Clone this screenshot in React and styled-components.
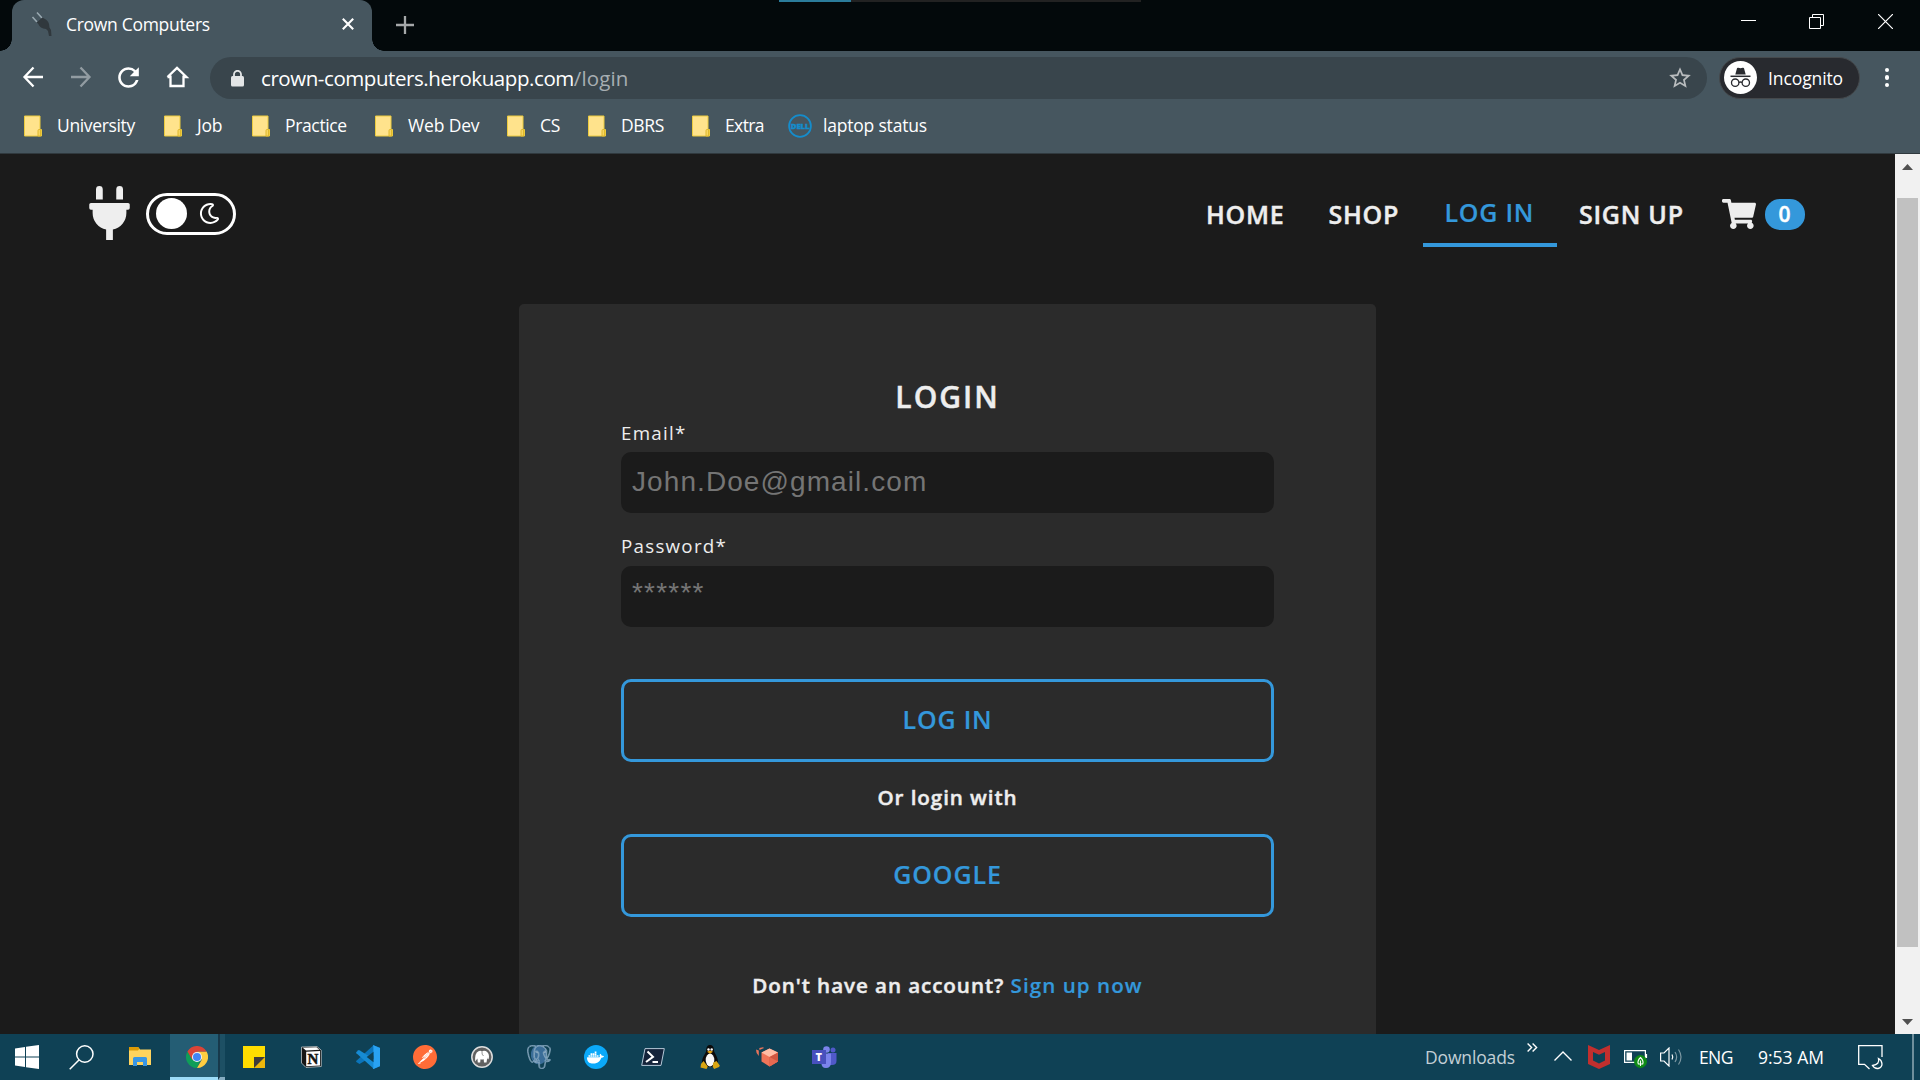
import React from "react";
import styled, { createGlobalStyle, css } from "styled-components";
import { FaPlug, FaShoppingCart, FaRegMoon } from "react-icons/fa";
import { MdRefresh, MdStarBorder } from "react-icons/md";
import { SiDocker, SiPostman, SiPostgresql } from "react-icons/si";

const GlobalStyle = createGlobalStyle`
  * { box-sizing: border-box; }
  html, body { margin: 0; padding: 0; background: #1b1b1b; overflow: hidden; }
  body { font-family: "Open Sans", "Noto Sans", sans-serif; }
  svg { display: block; flex: none; }
`;

const heavy = css`
  font-weight: 600;
  -webkit-text-stroke: 0.45px currentColor;
`;

const Screen = styled.div`
  width: 1920px;
  height: 1080px;
  display: flex;
  flex-direction: column;
  overflow: hidden;
  position: relative;
`;

/* ---------- browser chrome ---------- */

const TabStrip = styled.div`
  height: 51px;
  flex: none;
  display: flex;
  background: #03090b;
  padding-left: 12px;
`;

const LoadTrack = styled.div`
  position: absolute;
  top: 0;
  left: 779px;
  width: 362px;
  height: 2px;
  background: #222;
`;

const LoadValue = styled.div`
  width: 72px;
  height: 2px;
  background: #2b7c9b;
`;

const Tab = styled.div`
  position: relative;
  width: 360px;
  height: 51px;
  display: flex;
  align-items: center;
  padding: 0 18px 3px 19px;
  background: #46565f;
  border-radius: 12px 12px 0 0;
  &::before,
  &::after {
    content: "";
    position: absolute;
    bottom: 0;
    width: 12px;
    height: 12px;
  }
  &::before {
    left: -12px;
    background: radial-gradient(circle at 0 0, transparent 11.5px, #46565f 12px);
  }
  &::after {
    right: -12px;
    background: radial-gradient(circle at 100% 0, transparent 11.5px, #46565f 12px);
  }
`;

const TabTitle = styled.span`
  flex: 1;
  margin-left: 11px;
  color: #fff;
  font-size: 17.5px;
  letter-spacing: -0.3px;
  line-height: 24px;
  white-space: nowrap;
`;

const NewTab = styled.div`
  margin-left: 24px;
  display: flex;
  align-items: center;
  padding-bottom: 1px;
`;

const WindowControls = styled.div`
  margin-left: auto;
  display: grid;
  grid-template-columns: 68px 69px 15px;
  padding: 14px 27px 0 0;
  height: 30px;
`;

const Toolbar = styled.div`
  height: 54px;
  flex: none;
  display: flex;
  align-items: center;
  background: #46565f;
  padding-left: 18px;
`;

const NavButtons = styled.div`
  display: flex;
  gap: 17.5px;
  width: 192px;
  padding-bottom: 1px;
`;

const Omnibox = styled.div`
  width: 1497px;
  height: 42px;
  border-radius: 21px;
  background: #39454c;
  display: flex;
  align-items: center;
  padding: 0 14px 0 21px;
`;

const Url = styled.span`
  flex: 1;
  margin-left: 17px;
  font-size: 20.5px;
  line-height: 28px;
  color: #fff;
  letter-spacing: -0.43px;
  white-space: nowrap;
`;

const UrlPath = styled.span`
  color: #a7aeb2;
  letter-spacing: 0.1px;
`;

const Incognito = styled.div`
  margin-left: 12px;
  width: 141px;
  height: 42px;
  border-radius: 21px;
  border: 1px solid #45494c;
  background: #282a2f;
  display: flex;
  align-items: center;
  padding: 0 0 1px 4px;
  color: #fff;
  font-size: 17.5px;
  letter-spacing: -0.1px;
  gap: 11px;
`;

const Kebab = styled.div`
  margin-left: 24.5px;
  padding-bottom: 1px;
  display: flex;
  flex-direction: column;
  gap: 3px;
`;

const KebabDot = styled.i`
  width: 4.6px;
  height: 4.6px;
  border-radius: 50%;
  background: #fff;
`;

const BookmarkBar = styled.div`
  height: 49px;
  flex: none;
  display: flex;
  background: #46565f;
  border-bottom: 1px solid #30393e;
  padding: 0 0 8px 24px;
`;

const Bookmark = styled.div`
  width: ${(p) => p.$width}px;
  display: flex;
  align-items: center;
  gap: ${(p) => p.$gap || 15}px;
  color: #fff;
  font-size: 17.5px;
  letter-spacing: ${(p) => p.$track || 0}px;
  white-space: nowrap;
  svg {
    margin-top: 2px;
  }
`;

/* ---------- site ---------- */

const Viewport = styled.div`
  height: 880px;
  flex: none;
  display: flex;
`;

const Page = styled.main`
  width: 1895px;
  height: 880px;
  overflow: hidden;
  background: #1b1b1b;
  color: #eee;
`;

const Scrollbar = styled.div`
  width: 25px;
  background: #f1f1f1;
  display: flex;
  flex-direction: column;
  align-items: center;
  padding: 10px 0 9px;
`;

const ScrollThumb = styled.div`
  width: 21px;
  height: 749px;
  margin-top: 28px;
  margin-bottom: auto;
  background: #c1c1c1;
`;

const Header = styled.header`
  height: 121px;
  display: flex;
  align-items: center;
  padding: 0 90px 0 89px;
`;

const Brand = styled.div`
  display: flex;
  align-items: center;
  padding-bottom: 2px;
`;

const Logo = styled(FaPlug)`
  width: 41px;
  height: 54px;
  margin-bottom: 1px;
`;

const Toggle = styled.div`
  margin-left: 16px;
  width: 90px;
  height: 42px;
  border: 3px solid #fff;
  border-radius: 21px;
  display: flex;
  align-items: center;
  justify-content: space-between;
  padding: 0 13px 0 7px;
  color: #fff;
`;

const Knob = styled.span`
  width: 31px;
  height: 31px;
  border-radius: 50%;
  background: #fff;
`;

const Nav = styled.nav`
  margin-left: auto;
  display: flex;
  align-items: center;
`;

const NavLink = styled.a`
  width: ${(p) => p.$width}px;
  padding-left: ${(p) => p.$inset || 20}px;
  font-size: 25px;
  ${heavy}
  letter-spacing: 0.75px;
  line-height: 61px;
  white-space: nowrap;
  ${(p) =>
    p.$active &&
    css`
      -webkit-text-stroke-width: 0.2px;
      color: #3498db;
      border-bottom: 4px solid #3498db;
    `}
`;

const Cart = styled.div`
  display: flex;
  align-items: center;
  gap: 9px;
  margin-left: 14px;
  padding-bottom: 1px;
`;

const Badge = styled.span`
  width: 40px;
  height: 31px;
  border-radius: 15px;
  background: #3498db;
  color: #fff;
  font-size: 21px;
  ${heavy}
  line-height: 31px;
  text-align: center;
  padding-right: 1px;
`;

const Card = styled.section`
  width: 857px;
  height: 800px;
  margin: 29px 0 0 519px;
  padding: 72px 102px 0;
  border-radius: 5px;
  background: #2b2b2b;
  display: flex;
  flex-direction: column;
`;

const Title = styled.h1`
  margin: 0 0 3px;
  font-size: 30px;
  ${heavy}
  letter-spacing: 2px;
  line-height: 41px;
  text-align: center;
`;

const Field = styled.div`
  display: flex;
  flex-direction: column;
  margin-bottom: 20px;
`;

const Label = styled.label`
  font-size: 18.75px;
  letter-spacing: 1.25px;
  line-height: 26px;
  margin-bottom: ${(p) => p.$space}px;
`;

const Input = styled.input`
  height: 61px;
  border: 0;
  outline: 0;
  border-radius: 10px;
  background: #1b1b1b;
  padding: 0 11px ${(p) => (p.type === "password" ? 8 : 2)}px;
  font-family: "Liberation Sans", Arial, sans-serif;
  font-size: 28px;
  letter-spacing: ${(p) => (p.type === "password" ? 1.2 : 1.08)}px;
  color: #eee;
  &::placeholder {
    color: #757575;
    opacity: 1;
  }
`;

const OutlineButton = styled.button`
  height: 83px;
  flex: none;
  margin-top: ${(p) => p.$top || 0}px;
  border: 3px solid #3498db;
  border-radius: 10px;
  background: transparent;
  color: #3498db;
  font-family: inherit;
  font-size: 25px;
  ${heavy}
  -webkit-text-stroke-width: 0.2px;
  letter-spacing: ${(p) => p.$track}px;
  padding: 0 0 3px;
`;

const Divider = styled.p`
  margin: 0;
  height: 72px;
  font-size: 20.6px;
  ${heavy}
  letter-spacing: 0.93px;
  line-height: 70px;
  text-align: center;
`;

const SignUpLine = styled(Divider)`
  margin-top: 53px;
  line-height: 30px;
  white-space: nowrap;
`;

const SignUpLink = styled.a`
  color: #3498db;
  -webkit-text-stroke-width: 0.2px;
  letter-spacing: 1.05px;
`;

/* ---------- taskbar ---------- */

const Taskbar = styled.footer`
  height: 46px;
  flex: none;
  display: flex;
  align-items: center;
  background: #0f4155;
  color: #fff;
`;

const Slot = styled.div`
  width: ${(p) => p.$width || 57}px;
  height: 46px;
  display: flex;
  align-items: center;
  justify-content: center;
  padding-left: ${(p) => p.$nudge || 0}px;
`;

const ActiveApp = styled.div`
  margin-left: 2px;
  width: 48px;
  height: 46px;
  display: flex;
  align-items: center;
  justify-content: center;
  padding-top: 3px;
  padding-left: 5px;
  background: #245d74;
  border-bottom: 3px solid #9cdcf8;
`;

const ActiveEdge = styled.div`
  width: 7px;
  height: 46px;
  border-left: 2px solid #17394b;
  border-bottom: 3px solid #86adc2;
  background: #1d5064;
`;

const Tray = styled.div`
  margin-left: auto;
  display: flex;
  align-items: center;
  height: 46px;
`;

const TrayText = styled.span`
  width: ${(p) => p.$width}px;
  font-size: 17.5px;
  line-height: 46px;
  letter-spacing: ${(p) => p.$track || 0}px;
  color: ${(p) => p.$color || "#fff"};
  white-space: nowrap;
`;

const TrayIcon = styled.div`
  width: ${(p) => p.$width}px;
  padding-bottom: ${(p) => p.$lift || 0}px;
  padding-top: ${(p) => p.$drop || 0}px;
`;

const ShowDesktop = styled.div`
  width: 8px;
  height: 46px;
  border-left: 2px solid #6f8f9c;
`;

const RoundIcon = styled.span`
  width: 24px;
  height: 24px;
  border-radius: 50%;
  display: flex;
  align-items: center;
  justify-content: center;
  background: ${(p) => p.$bg};
  color: ${(p) => p.$fg};
`;

/* ---------- drawings ---------- */

const TabPlug = () => (
  <svg width="24" height="26" viewBox="0 0 24 26">
    <path d="M1.500 6 6 11M6 1.500l5 5.500" stroke="#9aa9b1" strokeWidth="1.600" />
    <path d="M5.500 11.500 11.500 6.500l1.500 1q4 1.500 5 5.500l.5 3.500 1.500 2.500.5 6h-2.500l-1-5-2-2q-6-.5-8-5.500z" fill="#30383d" />
  </svg>
);

const Folder = () => (
  <svg width="18" height="22" viewBox="0 0 18 22">
    <path d="M.5 1h15.500v13.500h1.500V21H.5z" fill="#ffe38c" stroke="#eccb3f" />
    <path d="M14 21v-5.500q0-1 1-1h1.500V21z" fill="#f6d662" stroke="#e0b82c" />
  </svg>
);

const DellText = styled.text`
  font: 900 7px "Open Sans", sans-serif;
  fill: #158ccb;
  stroke: #158ccb;
  stroke-width: 0.4px;
`;

const Dell = () => (
  <svg width="24" height="24" viewBox="0 0 24 24">
    <circle cx="12" cy="12" r="10.900" fill="none" stroke="#158ccb" strokeWidth="1.800" />
    <DellText x="2.800" y="14.500" textLength="18.500" lengthAdjust="spacingAndGlyphs">DELL</DellText>
  </svg>
);

const line = { fill: "none", stroke: "#fff", strokeWidth: 2.3 };

const Back = () => (
  <svg width="30" height="30" viewBox="0 0 30 30">
    <path {...line} d="M25 15H7M15.500 5.500 6.500 15l9 9.500" />
  </svg>
);
const Forward = () => (
  <svg width="30" height="30" viewBox="0 0 30 30">
    <path {...line} stroke="#929ca2" d="M5 15h18M14.500 5.500 23.500 15l-9 9.500" />
  </svg>
);
const Home = () => (
  <svg width="30" height="30" viewBox="0 0 30 30">
    <path {...line} d="M8.500 13.500V24h13V13.500M5.500 15 15 5.800 24.500 15h-3M5.500 15h3" />
  </svg>
);
const Lock = () => (
  <svg width="13" height="17" viewBox="0 0 13 17">
    <rect y="6" width="13" height="10.500" rx="1.500" fill="#e3e5e6" />
    <path d="M3 7V4.300a3.500 3.500 0 0 1 7 0V7" fill="none" stroke="#e3e5e6" strokeWidth="1.800" />
  </svg>
);
const Spy = () => (
  <svg width="33" height="33" viewBox="0 0 33 33">
    <circle cx="16.500" cy="16.500" r="16.500" fill="#fff" />
    <path d="M11.300 13.500 13 7.300q.3-.9 1.200-.6l2.300.6 2.300-.6q.9-.3 1.200.6l1.700 6.200z" fill="#282a2f" />
    <path d="M6.500 15.300h20" stroke="#282a2f" strokeWidth="1.500" />
    <g fill="none" stroke="#282a2f" strokeWidth="1.300">
      <circle cx="11.200" cy="21.700" r="3.700" />
      <circle cx="21.800" cy="21.700" r="3.700" />
      <path d="M14.900 21.500q1.600-1 3.200 0" />
    </g>
  </svg>
);

const Windows = () => (
  <svg width="24" height="24" viewBox="0 0 24 24" fill="#fff">
    <path d="M0 3.400 10 2v9.400H0zM11 1.800 24 0v11.400H11zM0 12.400h10V22L0 20.600zM11 12.400h13V24l-13-1.800z" />
  </svg>
);
const Search = () => (
  <svg width="25" height="25" viewBox="0 0 25 25" fill="none" stroke="#fff" strokeWidth="1.500">
    <circle cx="15.800" cy="9" r="8.200" />
    <path d="M10 15 .7 24.300" />
  </svg>
);
const Explorer = () => (
  <svg width="22" height="20" viewBox="0 0 22 20">
    <path d="M0 0h9l2 2.500H22V18H0z" fill="#ffd45e" />
    <path d="M0 0h9l1.500 1.500L9 3.500H0z" fill="#dd9b06" />
    <path d="M4 19v-7.500q0-1.500 1.500-1.500h11q1.500 0 1.500 1.500V19h-4v-4H8v4z" fill="#3a97e4" />
  </svg>
);
const Chrome = () => (
  <svg width="22" height="22" viewBox="0 0 48 48">
    <path d="M24 24 32 30 24 48A24 24 0 0 1 3.200 12L14 29z" fill="#0f9d58" />
    <path d="M24 12h20.800A24 24 0 0 1 24 48l10.400-18z" fill="#ffcd40" />
    <path d="M3.200 12 13.600 30 24 24V12h20.800A24 24 0 0 0 3.200 12z" fill="#db4437" />
    <circle cx="24" cy="24" r="11" fill="#f1f1f1" />
    <circle cx="24" cy="24" r="8.800" fill="#4285f4" />
  </svg>
);
const Sticky = () => (
  <svg width="22" height="22" viewBox="0 0 22 22">
    <path d="M0 0h22v22H0z" fill="#ffdd00" />
    <path d="M11 22 22 11v11z" fill="#eeb70c" />
    <path d="M11 22V11h11z" fill="#3f3c3a" />
  </svg>
);
const NotionN = styled.text`
  font: 700 15px "Liberation Serif", serif;
  fill: #151515;
  stroke: #151515;
  stroke-width: 0.5px;
`;
const Notion = () => (
  <svg width="22" height="22" viewBox="0 0 22 22">
    <path d="M1.500 1 17 .5l4.300 3.700V20.500L6 21.500 1.500 17z" fill="#161616" stroke="#b9c0c3" strokeWidth=".8" strokeLinejoin="round" />
    <path d="M2.800 1.800 16.500 1.200 19.500 3.700 6 4.500z" fill="#fff" />
    <path d="M6.200 5.800 20 5v14.500L6.200 20.300z" fill="#fff" />
    <NotionN x="7.600" y="17.600">N</NotionN>
  </svg>
);
const VSCode = () => (
  <svg width="24" height="24" viewBox="0 0 24 24">
    <path d="M17.500.2 24 2.800v4L3.500 19 .4 17q-.6-.6 0-1.200z" fill="#0b74ba" />
    <path d="M.4 7 2.400 5.200q.5-.3 1 0L24 18v3.300l-6.300 2.500L.4 8.200q-.6-.6 0-1.200z" fill="#168bd4" />
    <path d="M17.500.2 24 2.900v18.200l-6.500 2.800c-.8 0-1-.6-.1-1.200V1.400c-.8-.6-.6-1.200.1-1.200z" fill="#29a2f2" />
    <path d="M17.500 6.800v10.400L10.700 12z" fill="#0f4155" />
  </svg>
);
const Mamp = () => (
  <svg width="22" height="22" viewBox="0 0 22 22">
    <circle cx="11" cy="11" r="10.200" fill="#616161" stroke="#ddd" strokeWidth="1.500" />
    <path d="M4.200 15.500Q3.500 7 7.500 5.200q2-.8 3.500.3 1.500-1.300 3.700-.4 3.300 1.600 3.300 5.600 0 2-1 2.800-.8-.5-.8-2.300-.3 3.800-.7 5.200H13l-.3-3.200q-1.700.4-3.200 0l-.3 3.200H6.800l-.4-4z" fill="#fff" />
    <path d="M11 5.500q-.5 3 1.500 4.500" fill="none" stroke="#777" strokeWidth=".8" />
  </svg>
);
const Elephant = styled(SiPostgresql)`
  color: #31648c;
  stroke: #b8cedd;
  stroke-width: 0.5px;
  background: radial-gradient(ellipse at 50% 40%, #3a6d98 45%, transparent 50%);
`;
const PowerShell = () => (
  <svg width="24" height="18" viewBox="0 0 24 18">
    <path d="M4 .6h19.300L20 17.400H.7z" fill="#14233a" stroke="#b5c8d8" strokeWidth="1" />
    <path d="m6.500 3.500 5.500 5.300-7 5.200M11.500 14H17" fill="none" stroke="#fff" strokeWidth="2" />
  </svg>
);
const Tux = () => (
  <svg width="20" height="24" viewBox="0 0 20 24">
    <path d="M10 0c3 0 4 2.500 4 5.500 0 2.500 4 6 4 12L14.500 22h-9L2 17.500c0-6 4.200-9 4.200-12C6.200 2.500 7 0 10 0z" fill="#0b0b0b" />
    <ellipse cx="10" cy="15" rx="4.300" ry="6.500" fill="#f7f7f7" />
    <circle cx="8.500" cy="4.500" r="1.200" fill="#fff" />
    <circle cx="11.700" cy="4.500" r="1.200" fill="#fff" />
    <path d="M7 6.800 10 5.400l3 1.400-3 1.900z" fill="#e5a512" />
    <path d="M3.500 16 7.800 21.500 6.500 24 .5 22.500 1 19zM16.500 16l3.300 4.500-.7 1.500-5 2-1.500-2.500.8-4z" fill="#d8a511" />
  </svg>
);
const Cube = () => (
  <svg width="22" height="20" viewBox="0 0 22 20">
    <path d="m13.500 1.500 8.500 4v9L13.500 19.500 5.500 14.500v-9z" fill="#f07559" />
    <path d="m13.500 1.500 8.500 4-8.500 4.500-8-4.500z" fill="#ffbda6" />
    <path d="M13.500 10v9.500L22 14.500v-9z" fill="#cf5641" />
    <path d="m13.500 10 8.500 4.500L13.500 19.500z" fill="#e56a52" />
    <path d="m0 2.500 2.800 1V9L.6 6zM3.300 1 7 .2 8 1 3.500 3z" fill="#e9745b" />
  </svg>
);
const TeamsT = styled.text`
  font: 800 11px "Open Sans", sans-serif;
  fill: #fff;
`;
const Teams = () => (
  <svg width="25" height="22" viewBox="0 0 25 22">
    <circle cx="21" cy="4" r="2.500" fill="#5059c9" />
    <path d="M16 7h8.500v8q0 4-4.500 4h-4z" fill="#5059c9" />
    <circle cx="14.500" cy="3.500" r="3.300" fill="#7b83eb" />
    <path d="M9.500 7.500H19V16q0 6-5 6t-4.500-6z" fill="#7b83eb" />
    <rect y="4" width="14" height="14" fill="#4850bd" />
    <TeamsT x="3.500" y="15">T</TeamsT>
  </svg>
);

const bookmarks = [
  ["University", 140, -0.35],
  ["Job", 88, -0.2],
  ["Practice", 123, -0.35],
  ["Web Dev", 132, -0.15],
  ["CS", 81, -0.3],
  ["DBRS", 104, -0.35],
  ["Extra", 96, -0.6],
];

export default function App() {
  return (
    <Screen>
      <GlobalStyle />
      <TabStrip>
        <Tab>
          <TabPlug />
          <TabTitle>Crown Computers</TabTitle>
          <svg width="12" height="12" viewBox="0 0 12 12">
            <path d="m.8.800 10.400 10.400M11.200.8.800 11.200" stroke="#fff" strokeWidth="2.100" />
          </svg>
        </Tab>
        <NewTab>
          <svg width="18" height="18" viewBox="0 0 18 18">
            <path d="M9 0v18M0 9h18" stroke="#a5a8a9" strokeWidth="2.300" />
          </svg>
        </NewTab>
        <WindowControls>
          <svg width="15" height="15" viewBox="0 0 15 15">
            <path d="M0 6.500h15" stroke="#fff" />
          </svg>
          <svg width="15" height="15" viewBox="0 0 15 15" fill="none" stroke="#fff">
            <path d="M.5 3.500h11v11H.5zM3.500 3.500v-3h11v11h-3" />
          </svg>
          <svg width="15" height="15" viewBox="0 0 15 15">
            <path d="m0 0 15 15M15 0 0 15" stroke="#fff" strokeWidth="1.200" />
          </svg>
        </WindowControls>
      </TabStrip>
      <LoadTrack>
        <LoadValue />
      </LoadTrack>

      <Toolbar>
        <NavButtons>
          <Back />
          <Forward />
          <MdRefresh size={31} color="#fff" />
          <Home />
        </NavButtons>
        <Omnibox>
          <Lock />
          <Url>
            crown-computers.herokuapp.com<UrlPath>/login</UrlPath>
          </Url>
          <MdStarBorder size={26} color="#b9bcbe" />
        </Omnibox>
        <Incognito>
          <Spy />
          Incognito
        </Incognito>
        <Kebab>
          <KebabDot />
          <KebabDot />
          <KebabDot />
        </Kebab>
      </Toolbar>

      <BookmarkBar>
        {bookmarks.map(([name, width, track]) => (
          <Bookmark key={name} $width={width} $track={track}>
            <Folder />
            {name}
          </Bookmark>
        ))}
        <Bookmark $width={160} $gap={11} $track={-0.2}>
          <Dell />
          laptop status
        </Bookmark>
      </BookmarkBar>

      <Viewport>
        <Page>
          <Header>
            <Brand>
              <Logo />
              <Toggle>
                <Knob />
                <FaRegMoon size={21} />
              </Toggle>
            </Brand>
            <Nav>
              <NavLink $width={122} $inset={21}>HOME</NavLink>
              <NavLink $width={116} $inset={21.5}>SHOP</NavLink>
              <NavLink $width={134} $inset={21.5} $active>LOG IN</NavLink>
              <NavLink $width={151} $inset={22}>SIGN UP</NavLink>
              <Cart>
                <FaShoppingCart size={34} />
                <Badge>0</Badge>
              </Cart>
            </Nav>
          </Header>
          <Card>
            <Title>LOGIN</Title>
            <Field>
              <Label $space={6}>Email*</Label>
              <Input placeholder="John.Doe@gmail.com" />
            </Field>
            <Field>
              <Label $space={7}>Password*</Label>
              <Input type="password" placeholder="******" />
            </Field>
            <OutlineButton $top={32} $track={0.8}>LOG IN</OutlineButton>
            <Divider>Or login with</Divider>
            <OutlineButton $track={0.9}>GOOGLE</OutlineButton>
            <SignUpLine>
              Don't have an account? <SignUpLink>Sign up now</SignUpLink>
            </SignUpLine>
          </Card>
        </Page>
        <Scrollbar>
          <svg width="11" height="6" viewBox="0 0 11 6">
            <path d="M0 6 5.500 0 11 6z" fill="#505050" />
          </svg>
          <ScrollThumb />
          <svg width="11" height="6" viewBox="0 0 11 6">
            <path d="M0 0h11L5.500 6z" fill="#505050" />
          </svg>
        </Scrollbar>
      </Viewport>

      <Taskbar>
        <Slot $width={54}><Windows /></Slot>
        <Slot $width={54}><Search /></Slot>
        <Slot $width={60} $nudge={4}><Explorer /></Slot>
        <ActiveApp><Chrome /></ActiveApp>
        <ActiveEdge />
        <Slot><Sticky /></Slot>
        <Slot><Notion /></Slot>
        <Slot><VSCode /></Slot>
        <Slot>
          <RoundIcon $bg="radial-gradient(#fff 60%, transparent 62%)" $fg="#ff6c37">
            <SiPostman size={24} />
          </RoundIcon>
        </Slot>
        <Slot><Mamp /></Slot>
        <Slot><Elephant size={24} /></Slot>
        <Slot>
          <RoundIcon $bg="#0ba9f9" $fg="#fff">
            <SiDocker size={17} />
          </RoundIcon>
        </Slot>
        <Slot><PowerShell /></Slot>
        <Slot><Tux /></Slot>
        <Slot><Cube /></Slot>
        <Slot $nudge={1}><Teams /></Slot>
        <Tray>
          <TrayText $width={102} $color="#c3cfd5" $track={-0.15}>Downloads</TrayText>
          <TrayIcon $width={27} $lift={19}>
            <svg width="11" height="9" viewBox="0 0 11 9" fill="none" stroke="#fff" strokeWidth="1.400">
              <path d="m.6.500 4 4-4 4M5.600.5l4 4-4 4" />
            </svg>
          </TrayIcon>
          <TrayIcon $width={34} $lift={2}>
            <svg width="18" height="10" viewBox="0 0 18 10" fill="none" stroke="#fff" strokeWidth="1.400">
              <path d="M.5 9.500 9 1l8.500 8.500" />
            </svg>
          </TrayIcon>
          <TrayIcon $width={36}>
            <svg width="22" height="24" viewBox="0 0 22 24">
              <path d="m0 0 11 5L22 0v19l-11 5-11-5z" fill="#c22f2e" />
              <path d="m5 7 6 2.700L17 7v8.500L11 18.500 5 15.500z" fill="#0f4155" />
            </svg>
          </TrayIcon>
          <TrayIcon $width={36} $drop={4}>
            <svg width="24" height="18" viewBox="0 0 24 18">
              <path d="M.6.600h20.800v11.800H.6zM22.500 4v4" fill="none" stroke="#fff" strokeWidth="1.200" />
              <path d="M2.500 2.500H8v8H2.500z" fill="#fff" />
              <circle cx="16.500" cy="11.500" r="6.500" fill="#0f8a16" />
              <path d="M16.500 7.500q3.500 3.500 2.200 6.500h-4.400q-1.300-3 2.200-6.500zM16.500 10.500V16" fill="none" stroke="#fff" strokeWidth="1.100" />
            </svg>
          </TrayIcon>
          <TrayIcon $width={39}>
            <svg width="23" height="20" viewBox="0 0 23 20" fill="none" stroke="#fff" strokeWidth="1.200">
              <path d="M.6 6v8h3.400l5 5V1L4 6z" />
              <path d="M12 7.500q1.500 2.500 0 5" />
              <path d="M15 5q3.300 5 0 10M18.500 2.500q5 7.500 0 15" opacity=".45" />
            </svg>
          </TrayIcon>
          <TrayText $width={59} $track={-0.6}>ENG</TrayText>
          <TrayText $width={100}>9:53 AM</TrayText>
          <TrayIcon $width={54}>
            <svg width="25" height="25" viewBox="0 0 25 25" fill="none" stroke="#fff" strokeWidth="1.300">
              <path d="M24 12V.7H.7v18.600H6.500l5 4.700" />
              <path d="M20.500 13.500q1.500 6-6 7 2 3.300 5.500 3 4-1 4-4.500-.3-4-3.500-5.500z" />
            </svg>
          </TrayIcon>
          <ShowDesktop />
        </Tray>
      </Taskbar>
    </Screen>
  );
}
